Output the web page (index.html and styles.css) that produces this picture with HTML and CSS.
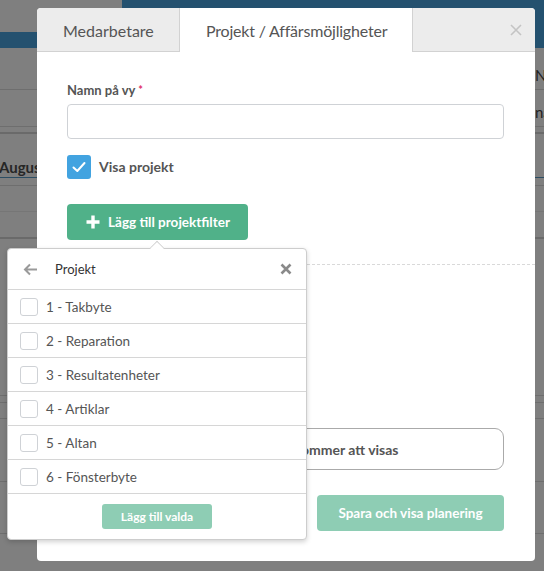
FILE: index.html
```html
<!DOCTYPE html>
<html lang="sv">
<head>
<meta charset="utf-8">
<title>Ny vy</title>
<link rel="stylesheet" href="styles.css">
</head>
<body>
<div class="bg">
  <div class="topbar"><div class="topbar-left"></div><div class="topbar-right"></div></div>
  <div class="bgrow r1"><span class="bgtext-right">Nam</span></div>
  <div class="bgrow r2"><span class="bgtext-right">nam</span></div>
  <div class="bgrow r3"></div>
  <div class="bgrow r4"><span class="bgtext-left">Augusti</span></div>
  <div class="bgrow r5"></div>
  <div class="bgrow r6"></div>
  <div class="bgrow r7"></div>
  <div class="bgrow r8"></div>
  <div class="bgrow r9"></div>
  <div class="bgrow r10"></div>
  <div class="bgrow r11"></div>
  <div class="bgrow r12"></div>
  <div class="bgcols"><div></div><div></div><div></div><div></div><div></div></div>
</div>

<div class="modal">
  <div class="tabs">
    <div class="tab">Medarbetare</div>
    <div class="tab active">Projekt / Affärsmöjligheter</div>
    <div class="tab close"><svg width="12" height="12" viewBox="0 0 12 12"><path d="M1 1L11 11M11 1L1 11" stroke="#c4c4c4" stroke-width="1.6" fill="none"/></svg></div>
  </div>
  <div class="modal-body">
    <label class="label">Namn på vy <span class="req">*</span></label>
    <input class="input" type="text">
    <div class="check-row">
      <span class="checkbox checked"><svg width="16" height="16" viewBox="0 0 16 16"><path d="M2.5 8.5L6.3 12L13.5 4" stroke="#fff" stroke-width="2" fill="none" stroke-linecap="round" stroke-linejoin="round"/></svg></span>
      <span class="check-label">Visa projekt</span>
    </div>
    <button class="btn btn-green"><svg width="16" height="16" viewBox="0 0 16 16"><path d="M8 1.5V14.5M1.5 8H14.5" stroke="#fff" stroke-width="3.4"/></svg>Lägg till projektfilter</button>
    <div class="dashed"></div>
    <div class="spacer"></div>
    <div class="info-box">Alla projekt kommer att visas</div>
    <div class="footer">
      <button class="btn btn-save">Spara och visa planering</button>
    </div>
  </div>
</div>

<div class="popover">
  <div class="pop-arrow"></div>
  <div class="pop-head">
    <svg class="back" width="15" height="13" viewBox="0 0 15 13"><path d="M14 6.5H2M7 1.5L2 6.5L7 11.5" stroke="#9a9a9a" stroke-width="2" fill="none"/></svg>
    <span class="pop-title">Projekt</span>
    <svg class="pop-x" width="12" height="12" viewBox="0 0 12 12"><path d="M1.5 1.5L10.5 10.5M10.5 1.5L1.5 10.5" stroke="#8a8a8a" stroke-width="2.6" fill="none"/></svg>
  </div>
  <div class="pop-row"><span class="cb"></span>1 - Takbyte</div>
  <div class="pop-row"><span class="cb"></span>2 - Reparation</div>
  <div class="pop-row"><span class="cb"></span>3 - Resultatenheter</div>
  <div class="pop-row"><span class="cb"></span>4 - Artiklar</div>
  <div class="pop-row"><span class="cb"></span>5 - Altan</div>
  <div class="pop-row"><span class="cb"></span>6 - Fönsterbyte</div>
  <div class="pop-foot"><button class="btn btn-small">Lägg till valda</button></div>
</div>
</body>
</html>
```
FILE: styles.css
```css
* { box-sizing: border-box; }
html, body { margin: 0; padding: 0; }
body {
  width: 544px;
  height: 571px;
  overflow: hidden;
  background: #7f7f7f;
  font-family: Lato, "Open Sans", Arial, sans-serif;
  position: relative;
}

/* dimmed background page */
.bg { width: 544px; height: 571px; overflow: hidden; }
.topbar { display: flex; height: 48px; }
.topbar-left { width: 122px; border-top: 32px solid #7f7f7f; background: #24516f; }
.topbar-right { flex: 1; background: #24516f; }
.bgrow { position: relative; border-bottom: 1px solid #6e6e6e; font-weight: 700; font-size: 15px; color: #262626; }
.r1 { height: 42px; }
.r2 { height: 37px; }
.r3 { height: 7px; border-bottom: 2px solid #6a6a6a; }
.r4 { height: 44px; border-bottom-color: #2c4d63; }
.r5 { height: 8px; }
.r6 { height: 26px; border-bottom-color: #767676; }
.r7 { height: 27px; border-bottom: 2px solid #6a6a6a; }
.r8 { height: 157px; }
.r9 { height: 7px; }
.r10 { height: 16px; }
.r11 { height: 63px; }
.r12 { height: 52px; }
.bgtext-right { position: absolute; left: 535px; bottom: 5px; white-space: nowrap; font-weight: 400; font-size: 15px; color: #222; }
.bgtext-left { position: absolute; left: -1px; bottom: 1px; white-space: nowrap; }
.bgcols { display: flex; height: 24px; overflow: hidden; }
.bgcols div { flex: none; width: 135px; border-right: 1px solid #6a6a6a; }
.bgcols div:first-child { width: 86px; }

/* modal */
.modal {
  position: absolute;
  left: 37px;
  top: 8px;
  width: 498px;
  height: 553px;
  background: #fff;
  border-radius: 4px;
  overflow: hidden;
  display: flex;
  flex-direction: column;
}
.tabs { display: flex; height: 44px; flex: none; }
.tab {
  background: #ececec;
  border-bottom: 1px solid #d2d2d2;
  color: #555;
  font-size: 16px;
  display: flex;
  align-items: center;
  padding-left: 26px;
  padding-top: 1px;
}
.tab:first-child { width: 143px; border-right: 1px solid #d2d2d2; }
.tab.active { background: #fff; border-bottom: none; width: 232px; letter-spacing: -0.2px; }
.tab.close { flex: 1; border-left: 1px solid #d2d2d2; justify-content: flex-end; padding-right: 13px; padding-left: 0; }

.modal-body { flex: 1; padding: 29px 31px 30px 30px; display: flex; flex-direction: column; }
.label { display: block; font-size: 13px; font-weight: 700; color: #555; line-height: 18px; height: 18px; }
.req { color: #e0306a; font-size: 11px; vertical-align: top; }
.input {
  display: block;
  margin-top: 5px;
  width: 437px;
  height: 35px;
  border: 1px solid #cfd2d6;
  border-radius: 4px;
  font: inherit;
}
.check-row { display: flex; align-items: center; margin-top: 16px; height: 24px; }
.checkbox { width: 24px; height: 24px; border-radius: 3px; background: #42a3e0; display: flex; align-items: center; justify-content: center; }
.check-label { margin-left: 8px; font-weight: 700; font-size: 14px; color: #555; padding-bottom: 2px; }

.btn { border: none; font-family: inherit; font-weight: 700; color: #fff; cursor: pointer; display: flex; align-items: center; justify-content: center; }
.btn-green {
  margin-top: 25px;
  width: 181px;
  height: 36px;
  background: #50b189;
  border-radius: 4px;
  font-size: 13.5px;
  gap: 7px;
  padding: 0;
}
.dashed { margin: 24px -31px 0 -30px; border-top: 1px dashed #d9d9d9; }
.spacer { flex: 1; }
.info-box {
  width: 437px;
  height: 42px;
  border: 1px solid #aaa;
  border-radius: 9px;
  display: flex;
  align-items: center;
  justify-content: center;
  font-size: 14px;
  font-weight: 700;
  color: #555;
  padding-left: 46px;
}
.footer { display: flex; justify-content: flex-end; margin-top: 25px; }
.btn-save { width: 187px; height: 36px; background: #8ecdb4; border-radius: 4px; font-size: 13.5px; }

/* popover */
.popover {
  position: absolute;
  left: 7px;
  top: 248px;
  width: 300px;
  height: 292px;
  background: #fff;
  border: 1px solid #cdcdcd;
  border-radius: 4px;
  box-shadow: 0 2px 5px rgba(0,0,0,0.18);
}
.pop-arrow {
  position: absolute;
  left: 142px;
  top: -8px;
  width: 14px;
  height: 14px;
  background: #fff;
  border-left: 1px solid #cdcdcd;
  border-top: 1px solid #cdcdcd;
  transform: rotate(45deg) scale(0.72);
  transform-origin: center;
}
.pop-head {
  height: 41px;
  border-bottom: 1px solid #d6d6d6;
  display: flex;
  align-items: center;
  padding: 0 14px 0 15px;
  position: relative;
}
.pop-title { margin-left: 17px; font-size: 13px; color: #333; flex: 1; }
.pop-row {
  height: 34px;
  border-bottom: 1px solid #d6d6d6;
  display: flex;
  align-items: center;
  padding-left: 12px;
  font-size: 13.5px;
  color: #555;
}
.cb { width: 18px; height: 18px; border: 1px solid #cfd2d6; border-radius: 3px; margin-right: 8px; background: #fff; }
.pop-foot { height: 45px; display: flex; align-items: center; justify-content: center; padding-top: 0; }
.btn-small { width: 110px; height: 25px; background: #8ecdb4; border-radius: 3px; font-size: 12px; }
```
